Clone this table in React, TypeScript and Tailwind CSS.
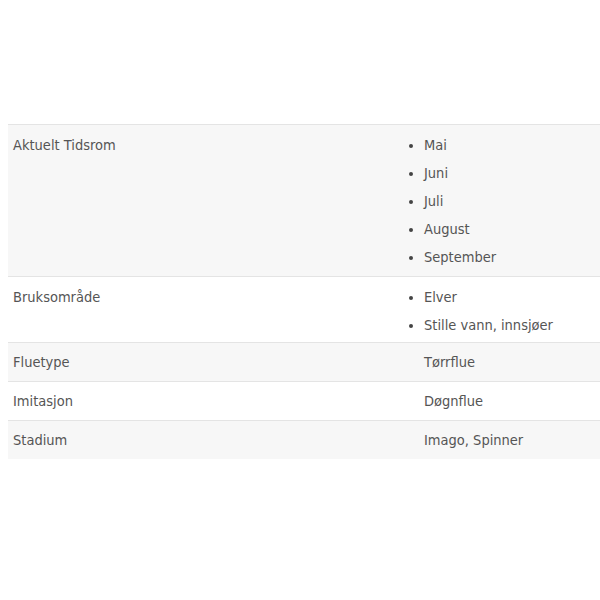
import { FC } from 'react';

type Row = {
  label: string;
  values: string[];
  list?: boolean;
};

const ROWS: Row[] = [
  { label: 'Aktuelt Tidsrom', values: ['Mai', 'Juni', 'Juli', 'August', 'September'], list: true },
  { label: 'Bruksområde', values: ['Elver', 'Stille vann, innsjøer'], list: true },
  { label: 'Fluetype', values: ['Tørrflue'] },
  { label: 'Imitasjon', values: ['Døgnflue'] },
  { label: 'Stadium', values: ['Imago, Spinner'] },
];

const App: FC = () => {
  return (
    <div
      className="w-[600px] h-[600px] bg-white pt-[124px] pl-[8px] text-[14.5px] text-[#555] font-stretch-condensed"
      style={{ fontFamily: '"DejaVu Sans", "Liberation Sans Narrow", sans-serif' }}
    >
      <table className="w-full border-collapse">
        <tbody>
          {ROWS.map((row, i) => {
            const pad = i === 1 ? 'pt-[6px] pb-[3px]' : 'pt-[6px] pb-[5px]';
            const lead = row.list ? 'leading-[28px]' : 'leading-[27px]';
            return (
              <tr
                key={row.label}
                className={`border-t border-[#e4e4e4] ${i % 2 === 0 ? 'bg-[#f7f7f7]' : 'bg-white'}`}
              >
                <td className={`w-[388px] align-top pl-[5px] ${pad} ${lead}`}>{row.label}</td>
                <td className={`align-top ${pad} ${lead}`}>
                  {row.list ? (
                    <ul className="list-disc pl-[28px] marker:text-[#444]">
                      {row.values.map((v) => (
                        <li key={v}>{v}</li>
                      ))}
                    </ul>
                  ) : (
                    <div className="pl-[28px]">{row.values[0]}</div>
                  )}
                </td>
              </tr>
            );
          })}
        </tbody>
      </table>
    </div>
  );
};

export default App;
